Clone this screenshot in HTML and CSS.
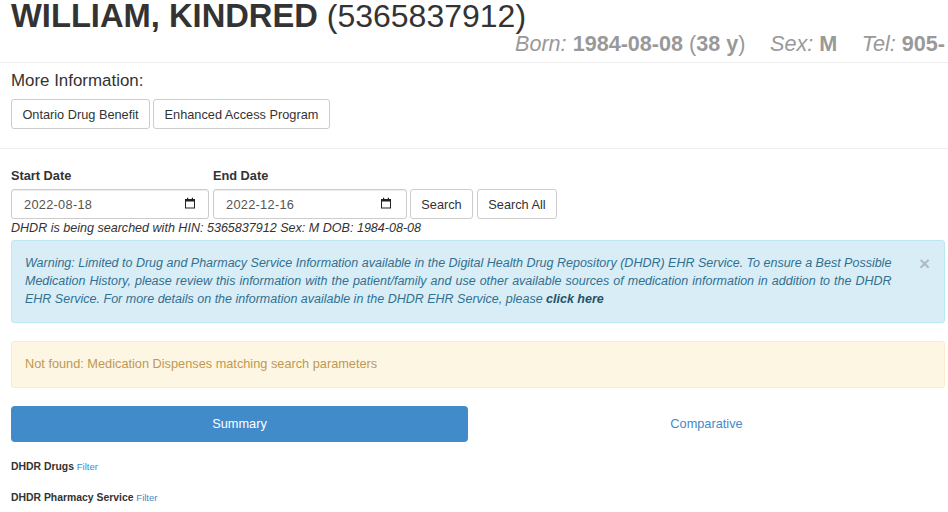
FILE: index.html
```html
<!DOCTYPE html>
<html lang="en">
<head>
    <meta charset="UTF-8">
    <meta name="viewport" content="width=device-width, initial-scale=1.0">
    <title>DHDR - William, Kindred</title>
    <link rel="stylesheet" href="styles.css">
</head>
<body>

    <div class="patient-header">
        <h1 class="patient-name"><b>WILLIAM, KINDRED</b> (5365837912)</h1>
        <div class="patient-details">
            <span class="detail"><i>Born:</i> <b>1984-08-08</b> (<b>38 y</b>)</span>
            <span class="detail"><i>Sex:</i> <b>M</b></span>
            <span class="detail"><i>Tel:</i> <b>905-</b></span>
        </div>
    </div>

    <div class="more-info">
        <h4>More Information:</h4>
        <div class="btn-row">
            <button type="button" class="btn">Ontario Drug Benefit</button>
            <button type="button" class="btn btn-wide">Enhanced Access Program</button>
        </div>
    </div>

    <div class="content">
        <form class="search-form">
            <div class="field field-start">
                <label>Start Date</label>
                <div class="date-input">
                    <span>2022-08-18</span>
                    <svg class="cal-icon" width="12" height="12" viewBox="0 0 12 12"><path d="M1 2h10v9.500H1z M2 4.500v6h8v-6z" fill="#222" fill-rule="evenodd"/><path d="M3 .8h1.200V2H3z M7.800 .8H9V2H7.800z" fill="#222"/></svg>
                </div>
            </div>
            <div class="field field-end">
                <label>End Date</label>
                <div class="date-input">
                    <span>2022-12-16</span>
                    <svg class="cal-icon" width="12" height="12" viewBox="0 0 12 12"><path d="M1 2h10v9.500H1z M2 4.500v6h8v-6z" fill="#222" fill-rule="evenodd"/><path d="M3 .8h1.200V2H3z M7.800 .8H9V2H7.800z" fill="#222"/></svg>
                </div>
            </div>
            <button type="button" class="btn btn-search">Search</button>
            <button type="button" class="btn btn-all">Search All</button>
        </form>
        <div class="search-note">DHDR is being searched with HIN: 5365837912 Sex: M DOB: 1984-08-08</div>

        <div class="alert alert-info">
            <span class="close">&times;</span>
            Warning: Limited to Drug and Pharmacy Service Information available in the Digital Health Drug Repository (DHDR) EHR Service. To ensure a Best Possible <span class="wide-line">Medication History, please review this information with the patient/family and use other available sources of medication information in addition to the DHDR</span> EHR Service. For more details on the information available in the DHDR EHR Service, please <a href="#">click here</a>
        </div>

        <div class="alert alert-warning">Not found: Medication Dispenses matching search parameters</div>

        <div class="tabs">
            <a href="#" class="tab active">Summary</a>
            <a href="#" class="tab">Comparative</a>
        </div>

        <div class="section-title">DHDR Drugs <a href="#">Filter</a></div>
        <div class="section-title">DHDR Pharmacy Service <a href="#">Filter</a></div>
    </div>

</body>
</html>
```

FILE: styles.css
```css
html, body {
    height: 512px;
    overflow: hidden;
}

body {
    font-family: "Liberation Sans", Arial, sans-serif;
    font-size: 12.750px;
    line-height: 18px;
    color: #333;
    background-color: #fff;
    margin: 0;
    padding: 0;
}

.patient-header {
    height: 62px;
    border-bottom: 1px solid #eee;
    padding-left: 11px;
    white-space: nowrap;
}

.patient-name {
    margin: 0;
    font-size: 32px;
    line-height: 32px;
    font-weight: normal;
}

.patient-name b {
    font-size: 32.700px;
}

.patient-details {
    margin-left: 504px;
    font-size: 21.600px;
    line-height: 24px;
    color: #999;
}

.detail {
    margin-right: 18.500px;
}

.more-info {
    height: 85px;
    padding: 0 11px;
    border-bottom: 1px solid #eee;
}

.more-info h4 {
    margin: 0;
    padding-top: 8px;
    font-size: 16.900px;
    line-height: 20px;
    font-weight: normal;
}

.btn-row {
    display: flex;
    gap: 3px;
    margin-top: 8px;
}

.btn {
    height: 30px;
    padding: 0;
    background-color: #fff;
    border: 1px solid #ccc;
    border-radius: 3px;
    font-family: inherit;
    font-size: 12.750px;
    color: #333;
    width: 139px;
}

.btn-wide {
    width: 177px;
}

.content {
    padding: 0 3px 0 11px;
}

.search-form {
    display: flex;
    align-items: flex-end;
    padding-top: 18px;
}

.field label {
    display: block;
    font-weight: bold;
    line-height: 18px;
    margin-bottom: 4px;
}

.field-start {
    width: 198px;
    margin-right: 4px;
}

.field-end {
    width: 194px;
    margin-right: 3px;
}

.date-input {
    display: flex;
    align-items: center;
    justify-content: space-between;
    height: 30px;
    box-sizing: border-box;
    padding: 0 12px;
    border: 1px solid #ccc;
    border-radius: 3px;
    box-shadow: inset 0 1px 1px rgba(0, 0, 0, 0.075);
    letter-spacing: 0.3px;
    color: #555;
}

.date-input span {
    padding-top: 2px;
}

.field-end .date-input {
    padding-right: 14px;
}

.cal-icon {
    margin-top: -2px;
}

.btn-search {
    width: 63px;
    margin-right: 4px;
}

.btn-all {
    width: 80px;
}

.search-note {
    font-style: italic;
    font-size: 12.560px;
    line-height: 18px;
}

.alert {
    border: 1px solid transparent;
    border-radius: 3px;
    box-sizing: border-box;
    padding: 13px 13px;
}

.alert-info {
    position: relative;
    height: 83px;
    margin-top: 3px;
    padding-right: 50px;
    background-color: #d9edf7;
    border-color: #bce8f1;
    color: #31708f;
    font-size: 12.500px;
    font-style: italic;
}

.alert-info a {
    color: #245269;
    font-weight: bold;
    text-decoration: none;
}

.wide-line {
    word-spacing: 0.55px;
}

.close {
    position: absolute;
    top: 14px;
    right: 14px;
    font-size: 19px;
    font-weight: bold;
    font-style: normal;
    color: #000;
    opacity: 0.2;
}

.alert-warning {
    height: 47px;
    margin-top: 18px;
    background-color: #fdf6e3;
    border-color: #faebcc;
    color: #c09853;
}

.tabs {
    display: flex;
    gap: 4px;
    margin-top: 18px;
    margin-bottom: 16px;
    padding-right: 4px;
}

.tab {
    flex: 1;
    height: 36px;
    line-height: 36px;
    text-align: center;
    border-radius: 4px;
    color: #428bca;
    text-decoration: none;
}

.tab.active {
    flex: none;
    width: 457px;
    background-color: #428bca;
    color: #fff;
}

.section-title {
    font-size: 10.400px;
    font-weight: bold;
    line-height: 18px;
    margin-bottom: 13px;
}

.section-title a {
    font-size: 9.500px;
    font-weight: normal;
    color: #428bca;
    text-decoration: none;
}
```
